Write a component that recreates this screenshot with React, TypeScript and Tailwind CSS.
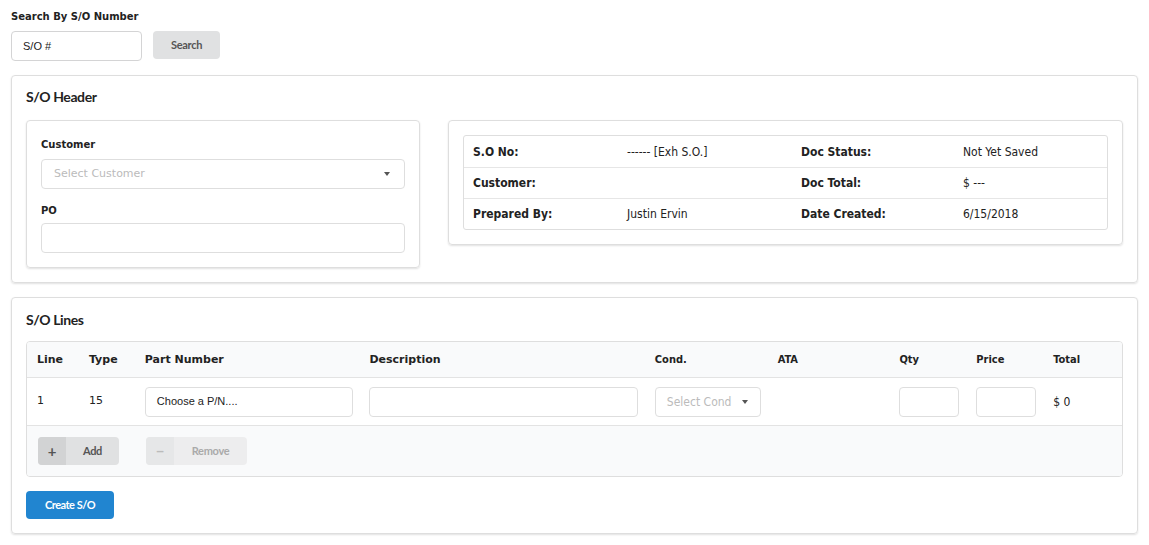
const verdana = "font-['Verdana','DejaVu_Sans',sans-serif]";
const lato = "font-['Lato',sans-serif]";
const cond = "font-['DejaVu_Sans_Condensed','Liberation_Sans',sans-serif]";

const Caret = () => (
  <svg width="6" height="4" viewBox="0 0 6 4" className="fill-[#555]">
    <path d="M0 0h6L3 4z" />
  </svg>
);

const infoRows = [
  ['S.O No:', '------ [Exh S.O.]', 'Doc Status:', 'Not Yet Saved'],
  ['Customer:', '', 'Doc Total:', '$ ---'],
  ['Prepared By:', 'Justin Ervin', 'Date Created:', '6/15/2018'],
];

const cols = [
  { name: 'Line', w: 'w-[52px]' },
  { name: 'Type', w: 'w-[56px]' },
  { name: 'Part Number', w: 'w-[225px]' },
  { name: 'Description', w: 'w-[286px]' },
  { name: 'Cond.', w: 'w-[123px]' },
  { name: 'ATA', w: 'w-[122px]' },
  { name: 'Qty', w: 'w-[77px]' },
  { name: 'Price', w: 'w-[77px]' },
  { name: 'Total', w: 'w-[79px]' },
];

export default function App() {
  return (
    <div className="min-h-screen bg-white px-[11px] pt-[10px] text-[#333]">
      {/* search */}
      <div className={`${verdana} text-[10px] leading-[14px] font-bold text-[#222]`}>Search By S/O Number</div>
      <div className="mt-[7px] flex gap-[11px]">
        <div className="flex h-[30px] w-[131px] items-center rounded-[4px] border border-[#d4d4d5] px-[11px] font-['Liberation_Sans',sans-serif] text-[11px] text-[#222]">
          S/O #
        </div>
        <button className={`${lato} h-[28px] w-[67px] rounded-[4px] bg-[#e0e1e2] text-[11px] font-bold tracking-[-0.3px] text-[#555]`}>
          Search
        </button>
      </div>

      {/* header */}
      <div className="mt-[14px] rounded-[4px] border border-[#dedede] shadow-[0_1px_2px_rgba(0,0,0,0.12)] px-[14px] pt-[13px] pb-[14px]">
        <div className={`${lato} text-[14px] leading-[16px] font-bold tracking-[-0.4px] text-[#222]`}>S/O Header</div>
        <div className="mt-[15px] flex gap-[28px]">
          <div className="w-[394px] rounded-[4px] border border-[#dedede] shadow-[0_1px_2px_rgba(0,0,0,0.12)] px-[14px] pt-[17px] pb-[14px]">
            <div className={`${verdana} text-[10px] leading-[14px] font-bold text-[#222]`}>Customer</div>
            <div className="mt-[7px] flex h-[30px] items-center justify-between rounded-[4px] border border-[#dedede] pl-[12px] pr-[14px]">
              <span className={`${verdana} text-[11px] text-[#bbb]`}>Select Customer</span>
              <Caret />
            </div>
            <div className={`${verdana} mt-[15px] text-[10px] leading-[14px] font-bold text-[#222]`}>PO</div>
            <div className="mt-[5px] h-[30px] rounded-[4px] border border-[#dedede]" />
          </div>
          <div className="self-start w-[675px] rounded-[4px] border border-[#dedede] shadow-[0_1px_2px_rgba(0,0,0,0.12)] p-[14px]">
            <div className={`${cond} rounded-[3px] border border-[#dedede] text-[12px] text-[#222]`}>
              {infoRows.map((r, i) => (
                <div key={i} className={`flex h-[31px] items-center ${i > 0 ? 'border-t border-[#e6e6e6]' : ''}`}>
                  <div className="w-[154px] pl-[9px] font-bold">{r[0]}</div>
                  <div className="w-[174px] pl-[9px]">{r[1]}</div>
                  <div className="w-[162px] pl-[9px] font-bold">{r[2]}</div>
                  <div className="flex-1 pl-[9px]">{r[3]}</div>
                </div>
              ))}
            </div>
          </div>
        </div>
      </div>

      {/* lines */}
      <div className="mt-[14px] rounded-[4px] border border-[#dedede] shadow-[0_1px_2px_rgba(0,0,0,0.12)] px-[14px] pt-[14px] pb-[14px]">
        <div className={`${lato} text-[14px] leading-[16px] font-bold tracking-[-0.4px] text-[#222]`}>S/O Lines</div>
        <div className="mt-[13px] overflow-hidden rounded-[4px] border border-[#dedede]">
          <div className="flex h-[35px] items-center bg-[#f9fafb] pt-[2px] text-[#222]">
            {cols.map((c) => (
              <div
                key={c.name}
                className={`${c.w} pl-[10px] text-[11px] font-bold ${
                  ['Cond.', 'ATA', 'Qty', 'Price', 'Total'].includes(c.name) ? cond : verdana
                }`}
              >
                {c.name}
              </div>
            ))}
          </div>
          <div className="flex h-[48px] items-center border-t border-[#e3e3e3] text-[11px] text-[#222]">
            <div className={`${verdana} w-[52px] pl-[10px]`}>1</div>
            <div className={`${verdana} w-[56px] pl-[10px]`}>15</div>
            <div className="w-[225px] pl-[10px]">
              <div className="flex h-[30px] w-[208px] items-center rounded-[4px] border border-[#dedede] pl-[11px] font-['Liberation_Sans',sans-serif] text-[11px]">
                Choose a P/N....
              </div>
            </div>
            <div className="w-[286px] pl-[10px]">
              <div className="h-[30px] w-[269px] rounded-[4px] border border-[#dedede]" />
            </div>
            <div className="w-[123px] pl-[10px]">
              <div className="flex h-[30px] w-[106px] items-center gap-[11px] rounded-[4px] border border-[#dedede] pl-[11px]">
                <span className={`${cond} text-[12px] text-[#bbb]`}>Select Cond</span>
                <Caret />
              </div>
            </div>
            <div className="w-[122px]" />
            <div className="w-[77px] pl-[10px]">
              <div className="h-[30px] w-[60px] rounded-[4px] border border-[#dedede]" />
            </div>
            <div className="w-[77px] pl-[10px]">
              <div className="h-[30px] w-[60px] rounded-[4px] border border-[#dedede]" />
            </div>
            <div className={`${cond} w-[79px] pl-[10px] text-[12px]`}>$ 0</div>
          </div>
          <div className="flex h-[51px] items-center gap-[27px] border-t border-[#e3e3e3] bg-[#f9fafb] pl-[11px]">
            <button className={`${lato} flex h-[28px] w-[81px] overflow-hidden rounded-[4px] bg-[#e0e1e2] text-[11px] font-bold tracking-[-0.3px] text-[#555]`}>
              <span className="flex h-full w-[28px] items-center justify-center bg-[#d2d3d4] text-[15px] text-[#555]">+</span>
              <span className="flex flex-1 items-center justify-center">Add</span>
            </button>
            <button className={`${lato} flex h-[28px] w-[101px] overflow-hidden rounded-[4px] bg-[#ededee] text-[11px] font-bold tracking-[-0.3px] text-[#aaa]`}>
              <span className="flex h-full w-[28px] items-center justify-center bg-[#e6e7e8] text-[15px] text-[#bbb]">−</span>
              <span className="flex flex-1 items-center justify-center">Remove</span>
            </button>
          </div>
        </div>
        <button className={`${lato} mt-[14px] h-[28px] w-[88px] rounded-[4px] bg-[#2185d0] text-[11px] font-bold tracking-[-0.5px] text-white`}>
          Create S/O
        </button>
      </div>
    </div>
  );
}
